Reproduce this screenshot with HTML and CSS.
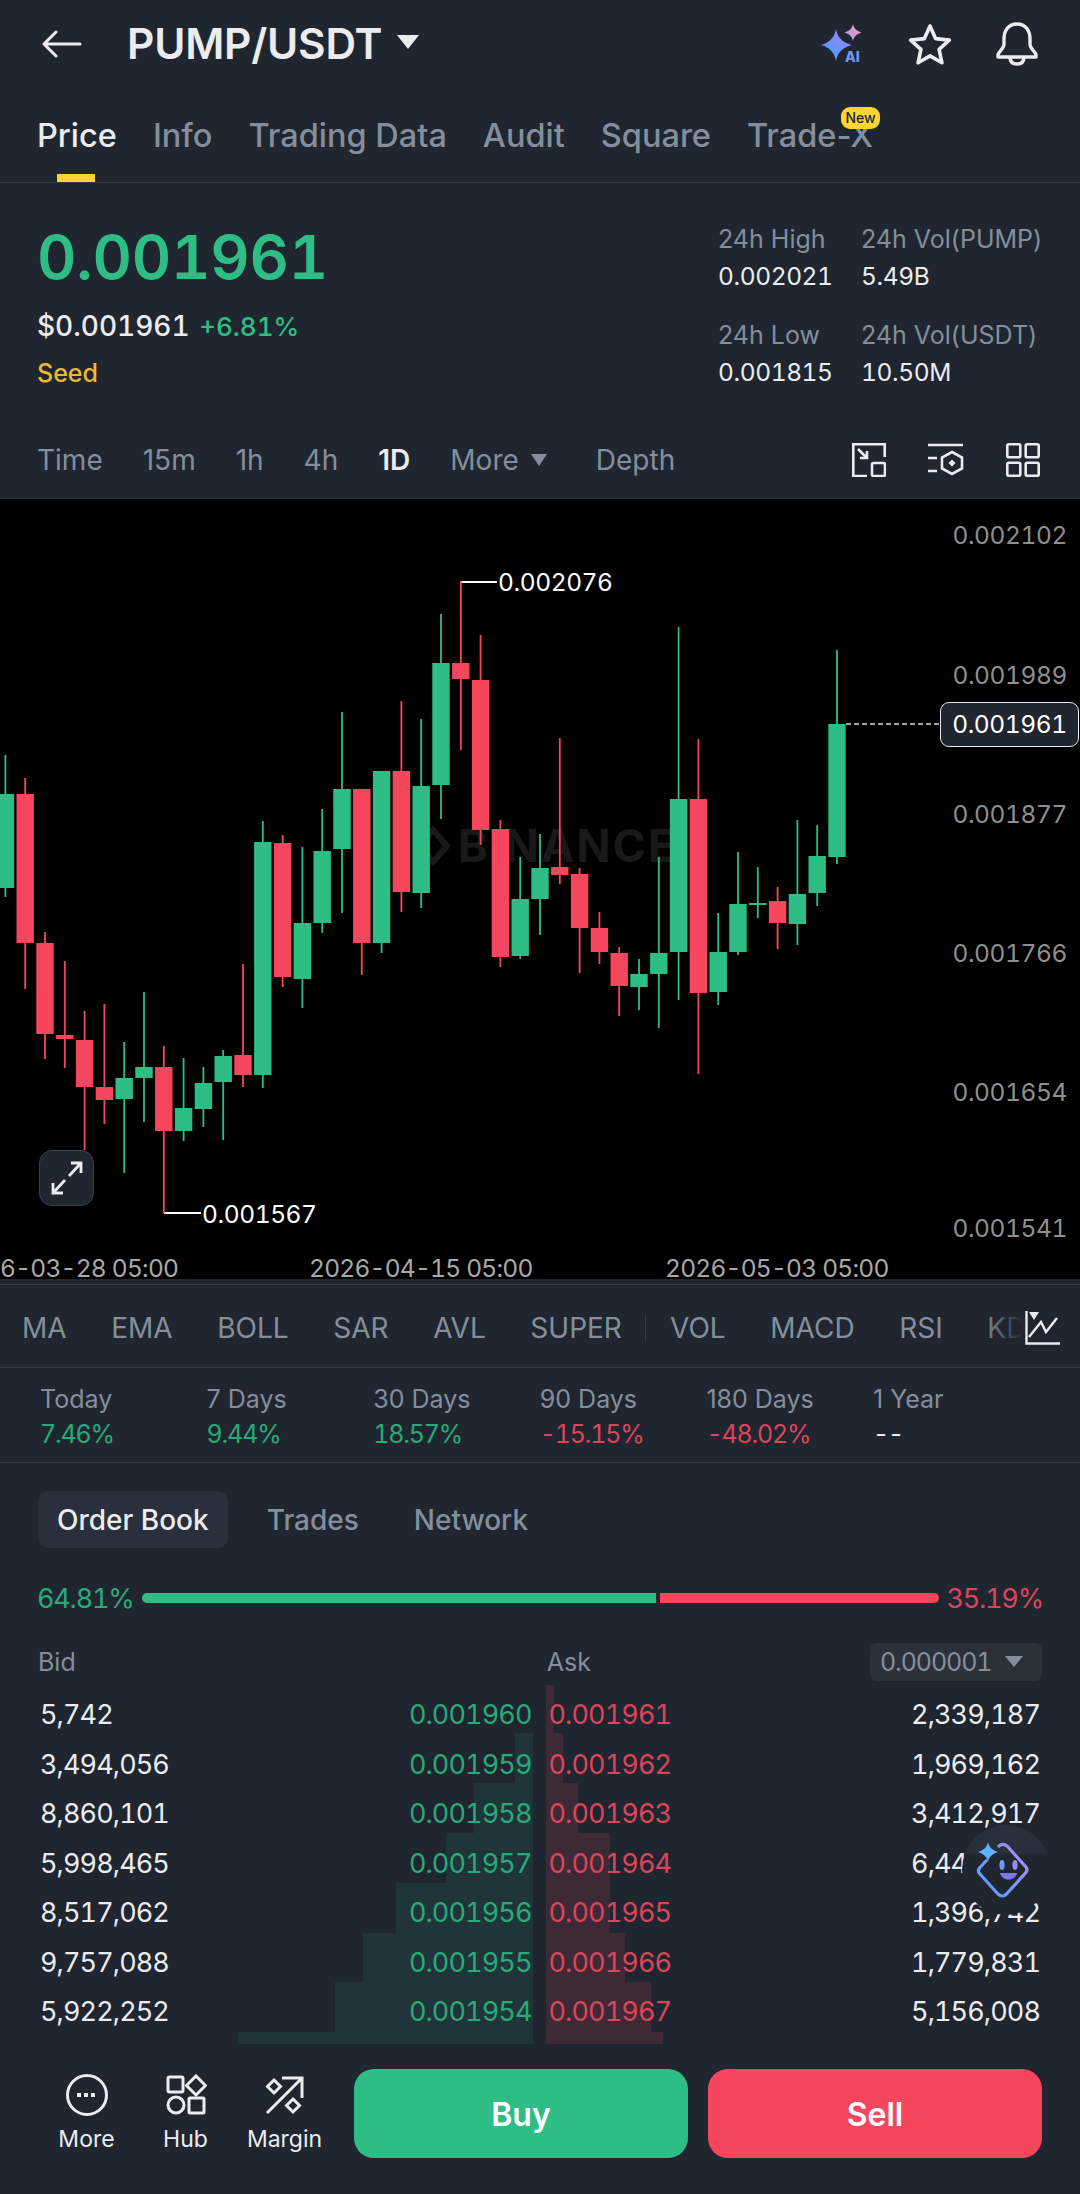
FILE: index.html
```html
<!DOCTYPE html>
<html lang="en">
<head>
    <meta charset="UTF-8">
    <meta name="viewport" content="width=device-width, initial-scale=1.0">
    <title>PUMP/USDT</title>
    <link rel="stylesheet" href="styles.css">
</head>
<body>
<div class="app">

    <header class="topbar">
        <svg class="back" width="40" height="28" viewBox="0 0 40 28" fill="none" stroke="#eaecef" stroke-width="3" stroke-linecap="round" stroke-linejoin="round"><path d="M38 14H2M14 2 2 14l12 12"/></svg>
        <h1 class="pair">PUMP/USDT</h1>
        <span class="caret caret-title"></span>
        <div class="top-icons">
            <svg class="icon-ai" width="46" height="40" viewBox="0 0 46 40">
                <defs>
                    <linearGradient id="aiBig" x1="0" y1="1" x2="1" y2="0"><stop offset="0" stop-color="#3f9bff"/><stop offset="1" stop-color="#a884ff"/></linearGradient>
                    <linearGradient id="aiSmall" x1="0" y1="1" x2="1" y2="0"><stop offset="0" stop-color="#a98cf5"/><stop offset="1" stop-color="#f5a3b8"/></linearGradient>
                </defs>
                <path fill="url(#aiBig)" d="M16 5c1.500 8 6 13.500 16 16-10 2.500-14.500 8-16 16-1.500-8-6-13.500-15-16 9-2.500 13.500-8 15-16z"/>
                <path fill="url(#aiSmall)" d="M33 0c.8 4 3.500 7 8.500 8.500-5 1.500-7.700 4.500-8.500 8.500-.8-4-3.500-7-8.500-8.500 5-1.500 7.700-4.500 8.500-8.500z"/>
                <text class="ai-text" x="25" y="38">AI</text>
            </svg>
            <svg class="icon-star" width="44" height="42" viewBox="0 0 44 42" fill="none" stroke="#eaecef" stroke-width="3.600" stroke-linejoin="round"><path d="M22 3l5.600 12.600 13.700 1.500-10.200 9.200 2.800 13.500-11.900-6.900-11.900 6.900 2.800-13.500L2.700 17.100l13.700-1.500z"/></svg>
            <svg class="icon-bell" width="42" height="44" viewBox="0 0 42 44" fill="none" stroke="#eaecef" stroke-width="3.400" stroke-linejoin="round"><path d="M21 2C12 2 8 9 8 17v5c0 5-6 8-6 11v2h38v-2c0-3-6-6-6-11v-5c0-8-4-15-13-15z"/><path d="M14 35c0 5 3 7 7 7s7-2 7-7"/></svg>
        </div>
    </header>

    <nav class="tabs">
        <a class="tab active">Price</a>
        <a class="tab">Info</a>
        <a class="tab">Trading Data</a>
        <a class="tab">Audit</a>
        <a class="tab">Square</a>
        <a class="tab">Trade-X<span class="badge">New</span></a>
    </nav>

    <section class="summary">
        <div class="price-box">
            <div class="last-price">0.001961</div>
            <div class="sub-price">$0.001961 <span class="up">+6.81%</span></div>
            <div class="seed">Seed</div>
        </div>
        <div class="stats">
            <div class="stat"><span class="stat-label">24h High</span><span class="stat-value">0.002021</span></div>
            <div class="stat"><span class="stat-label">24h Vol(PUMP)</span><span class="stat-value">5.49B</span></div>
            <div class="stat"><span class="stat-label">24h Low</span><span class="stat-value">0.001815</span></div>
            <div class="stat"><span class="stat-label">24h Vol(USDT)</span><span class="stat-value">10.50M</span></div>
        </div>
    </section>

    <div class="intervals">
        <span>Time</span>
        <span>15m</span>
        <span>1h</span>
        <span>4h</span>
        <span class="current">1D</span>
        <span class="more">More<i class="caret caret-more"></i></span>
        <span class="depth">Depth</span>
        <div class="chart-tools">
            <svg width="34" height="34" viewBox="0 0 34 34" fill="none" stroke="#eaecef" stroke-width="2.600"><path d="M15 33H1.300V1.300h31.400V14"/><rect x="20" y="20" width="13" height="13" rx="1.500"/><path d="M6 6l9 9M15 8v7H8"/></svg>
            <svg width="36" height="33" viewBox="0 0 36 33" fill="none" stroke="#eaecef" stroke-width="2.600"><path d="M0 2h35M0 15h9M0 28h9"/><path d="M24 9l10 5.500v11L24 31l-10-5.500v-11z"/><path fill="#eaecef" stroke="none" d="M24 16.500l3.500 3.500-3.500 3.500-3.500-3.500z"/></svg>
            <svg width="34" height="34" viewBox="0 0 34 34" fill="none" stroke="#eaecef" stroke-width="2.600"><rect x="1.300" y="1.300" width="13" height="13" rx="1.500"/><rect x="19.700" y="1.300" width="13" height="13" rx="1.500"/><rect x="1.300" y="19.700" width="13" height="13" rx="1.500"/><rect x="19.700" y="19.700" width="13" height="13" rx="1.500"/></svg>
        </div>
    </div>

    <section class="chart">
        <div class="watermark">
            <svg width="34" height="40" viewBox="0 0 34 40" fill="none" stroke="#191919" stroke-width="6"><path d="M17 4 31 20 17 36 3 20z"/></svg>
            <span>BINANCE</span>
        </div>
        <svg id="candles" class="candles" width="1080" height="780" viewBox="0 499 1080 780">
            <path d="M461 582h36M164 1213h37" stroke="#fff" stroke-width="2" fill="none"/>
            <path d="M846 724h94" stroke="#d5d5d5" stroke-width="1.500" stroke-dasharray="5 3" fill="none"/>
        </svg>
        <span class="axis axis-1">0.002102</span>
        <span class="axis axis-2">0.001989</span>
        <span class="axis axis-3">0.001877</span>
        <span class="axis axis-4">0.001766</span>
        <span class="axis axis-5">0.001654</span>
        <span class="axis axis-6">0.001541</span>
        <span class="now-tag">0.001961</span>
        <span class="mark mark-high">0.002076</span>
        <span class="mark mark-low">0.001567</span>
        <span class="date date-1">6-03-28 05:00</span>
        <span class="date date-2">2026-04-15 05:00</span>
        <span class="date date-3">2026-05-03 05:00</span>
        <button class="expand">
            <svg width="34" height="36" viewBox="0 0 34 36" fill="none" stroke="#eaecef" stroke-width="2.800"><path d="M19 16 31 3M21 3h10v10M15 20 3 33M3 23v10h10"/></svg>
        </button>
    </section>

    <div class="indicators">
        <span>MA</span>
        <span>EMA</span>
        <span>BOLL</span>
        <span>SAR</span>
        <span>AVL</span>
        <span>SUPER</span>
        <i class="sep"></i>
        <span>VOL</span>
        <span>MACD</span>
        <span>RSI</span>
        <span>KDJ</span>
        <div class="indicator-btn">
            <svg width="36" height="35" viewBox="0 0 36 35" fill="none" stroke="#eaecef" stroke-width="2.400"><path d="M1.500 1v32.500H35"/><path d="M4 27 16 12l5 10L32 8"/><path fill="#eaecef" stroke="none" d="M4 2h10L9 10z"/></svg>
        </div>
    </div>

    <div class="periods">
        <div class="period"><span>Today</span><b class="up">7.46%</b></div>
        <div class="period"><span>7 Days</span><b class="up">9.44%</b></div>
        <div class="period"><span>30 Days</span><b class="up">18.57%</b></div>
        <div class="period"><span>90 Days</span><b class="down">-15.15%</b></div>
        <div class="period"><span>180 Days</span><b class="down">-48.02%</b></div>
        <div class="period"><span>1 Year</span><b class="flat">--</b></div>
    </div>

    <div class="book-tabs">
        <a class="book-tab active">Order Book</a>
        <a class="book-tab">Trades</a>
        <a class="book-tab">Network</a>
    </div>

    <div class="ratio">
        <span class="up">64.81%</span>
        <div class="ratio-bar">
            <i class="ratio-buy"></i>
            <i class="ratio-sell"></i>
        </div>
        <span class="down">35.19%</span>
    </div>

    <div class="book-head">
        <span class="head-bid">Bid</span>
        <span class="head-ask">Ask</span>
        <span class="tick">0.000001<i class="caret caret-tick"></i></span>
    </div>

    <section class="book">
        <svg class="depth-bg" width="1080" height="364" viewBox="0 1680 1080 364">
            <path fill="#2ebd85" fill-opacity="0.1" d="M533 1733h-18v50h-41v50h-28v50h-50v50h-33v49h-28v50H238v12h295z"/>
            <path fill="#f6465d" fill-opacity="0.14" d="M546 1685h8v48h9v50h15v50h32v100h15v49h26v50h12v12H546z"/>
        </svg>
        <div class="row"><div class="side"><span>5,742</span><span class="up">0.001960</span></div><div class="side"><span class="down">0.001961</span><span>2,339,187</span></div></div>
        <div class="row"><div class="side"><span>3,494,056</span><span class="up">0.001959</span></div><div class="side"><span class="down">0.001962</span><span>1,969,162</span></div></div>
        <div class="row"><div class="side"><span>8,860,101</span><span class="up">0.001958</span></div><div class="side"><span class="down">0.001963</span><span>3,412,917</span></div></div>
        <div class="row"><div class="side"><span>5,998,465</span><span class="up">0.001957</span></div><div class="side"><span class="down">0.001964</span><span>6,443,208</span></div></div>
        <div class="row"><div class="side"><span>8,517,062</span><span class="up">0.001956</span></div><div class="side"><span class="down">0.001965</span><span>1,396,742</span></div></div>
        <div class="row"><div class="side"><span>9,757,088</span><span class="up">0.001955</span></div><div class="side"><span class="down">0.001966</span><span>1,779,831</span></div></div>
        <div class="row"><div class="side"><span>5,922,252</span><span class="up">0.001954</span></div><div class="side"><span class="down">0.001967</span><span>5,156,008</span></div></div>
        <div class="bot">
            <svg width="88" height="90" viewBox="0 0 88 90" fill="none">
                <defs>
                    <linearGradient id="botLine" x1="0" y1="1" x2="1" y2="0"><stop offset="0" stop-color="#4aa3ff"/><stop offset="1" stop-color="#b08cf5"/></linearGradient>
                </defs>
                <path stroke="url(#botLine)" stroke-width="3.200" stroke-linecap="round" d="M24 36l-6 6.500c-2 2-2 4.500 0 6.500l18 20c2.500 2.500 6 2.500 8.500 0l19-21c1.800-2 1.800-4.500 0-6.500l-18-20c-2.500-2.800-6-2.800-8.500-.5"/>
                <path fill="#5fb0ff" d="M26 17c1 5 4 8 10 10-6 2-9 5-10 10-1-5-4-8-10-10 6-2 9-5 10-10z"/>
                <ellipse cx="40" cy="40" rx="2.600" ry="5" fill="#6f97f5"/>
                <ellipse cx="53" cy="40" rx="2.600" ry="5" fill="#8d8cf5"/>
                <path fill="#7b78f0" d="M38 48h17c-1 4-4 6.500-8.500 6.500S39 52 38 48z"/>
            </svg>
        </div>
    </section>

    <footer class="actions">
        <a class="action">
            <svg width="42" height="42" viewBox="0 0 42 42" fill="none" stroke="#eaecef" stroke-width="3"><circle cx="21" cy="21" r="19.500"/><path stroke-width="4" stroke-dasharray="4 3" d="M11 21h21"/></svg>
            <span>More</span>
        </a>
        <a class="action">
            <svg width="42" height="42" viewBox="0 0 42 42" fill="none" stroke="#eaecef" stroke-width="3"><rect x="3" y="3" width="15" height="15" rx="1.500"/><path d="M31 2l9.500 9.500L31 21l-9.500-9.500z"/><circle cx="11" cy="31" r="8"/><rect x="24" y="24" width="15" height="15" rx="1"/></svg>
            <span>Hub</span>
        </a>
        <a class="action">
            <svg width="42" height="42" viewBox="0 0 42 42" fill="none" stroke="#eaecef" stroke-width="3"><path d="M3 39 38 4M18 4h20v20"/><path d="M10 6l6.500 6.500L10 19l-6.500-6.500z"/><path d="M29 25l6.500 6.500L29 38l-6.500-6.500z"/></svg>
            <span>Margin</span>
        </a>
        <button class="trade buy">Buy</button>
        <button class="trade sell">Sell</button>
    </footer>

</div>
<script src="chart.js"></script>
</body>
</html>
```

FILE: styles.css
```css
* {
    box-sizing: border-box;
}
body {
    margin: 0;
    background-color: #1f2630;
    font-family: Inter, "Liberation Sans", sans-serif;
    color: #eaecef;
}
a {
    display: block;
}
.app {
    width: 1080px;
    height: 2194px;
    overflow: hidden;
    background-color: #1f2630;
}
.up {
    color: #2ebd85;
}
.down {
    color: #f6465d;
}
.caret {
    display: block;
    width: 0;
    height: 0;
    border-style: solid;
    border-color: transparent;
    border-top-color: #eaecef;
}

/* figures use even digit widths, like the app */
.last-price,
.sub-price,
.stat-value,
.axis,
.now-tag,
.mark,
.date,
.period b,
.ratio,
.tick,
.row {
    font-variant-numeric: tabular-nums;
}

/* top bar */
.topbar {
    display: flex;
    align-items: center;
    height: 88px;
    padding-left: 42px;
}
.pair {
    margin: 0 0 0 45px;
    font-size: 42.4px;
    font-weight: 600;
    line-height: 48px;
    letter-spacing: -0.2px;
}
.caret-title {
    margin: 0 0 4px 15px;
    border-width: 14px 11px 0;
}
.top-icons {
    display: flex;
    align-items: center;
    margin-left: auto;
    padding-right: 42px;
}
.icon-ai {
    margin-right: 42px;
}
.icon-star {
    margin-right: 44px;
}
.ai-text {
    font-size: 14px;
    font-weight: 800;
    fill: #6f97f5;
}

/* tabs */
.tabs {
    display: flex;
    gap: 36px;
    height: 95px;
    padding: 30px 0 0 37px;
    border-bottom: 1px solid #343b46;
}
.tab {
    position: relative;
    height: 36px;
    font-size: 32.5px;
    font-weight: 500;
    line-height: 36px;
    color: #848e9c;
    white-space: nowrap;
}
.tab.active {
    color: #eaecef;
}
.tab.active::after {
    content: "";
    position: absolute;
    left: 20px;
    top: 56px;
    width: 38px;
    height: 8px;
    background-color: #fcd535;
}
.badge {
    position: absolute;
    right: -7px;
    top: -11px;
    width: 39px;
    height: 22px;
    border-radius: 9px;
    background-color: #fcd535;
    color: #202630;
    font-size: 14px;
    font-weight: 500;
    line-height: 22px;
    text-align: center;
}

/* price summary */
.summary {
    display: flex;
    justify-content: space-between;
    height: 238px;
    padding: 0 38px 0 37px;
}
.price-box {
    padding-top: 37px;
}
.last-price {
    font-size: 61px;
    font-weight: 600;
    line-height: 74px;
    letter-spacing: -0.2px;
    color: #2ebd85;
}
.sub-price {
    margin-top: 14px;
    font-size: 28px;
    font-weight: 500;
    line-height: 36px;
}
.sub-price .up {
    font-size: 26px;
    margin-left: 2px;
}
.seed {
    margin-top: 12px;
    font-size: 25px;
    font-weight: 500;
    line-height: 32px;
    color: #ecb92f;
}
.stats {
    display: grid;
    grid-template-columns: 143px 181px;
    align-content: start;
    row-gap: 27px;
    padding-top: 40px;
}
.stat-label,
.stat-value {
    display: block;
    font-size: 25px;
    line-height: 32px;
    white-space: nowrap;
}
.stat-label {
    color: #848e9c;
}
.stat-value {
    margin-top: 5px;
    font-size: 24.5px;
    letter-spacing: -0.4px;
}

/* intervals */
.intervals {
    display: flex;
    align-items: center;
    gap: 40px;
    height: 77px;
    padding: 0 40px 0 37px;
    font-size: 28px;
    color: #848e9c;
}
.intervals .current {
    color: #eaecef;
    font-weight: 600;
}
.more {
    display: flex;
    align-items: center;
}
.caret-more {
    margin-left: 12px;
    border-width: 12px 8px 0;
    border-top-color: #848e9c;
}
.depth {
    margin-left: 9px;
}
.chart-tools {
    display: flex;
    align-items: center;
    gap: 42px;
    margin-left: auto;
}

/* chart */
.chart {
    position: relative;
    height: 781px;
    margin-bottom: 5px;
    border-top: 1px solid #2b3139;
    background-color: #000;
}
.candles {
    position: absolute;
    left: 0;
    top: 0;
}
.watermark {
    position: absolute;
    left: 416px;
    top: 325px;
    display: flex;
    align-items: center;
    gap: 8px;
    font-size: 45px;
    font-weight: 700;
    line-height: 44px;
    letter-spacing: 2px;
    color: #191919;
}
.axis,
.now-tag,
.mark,
.date {
    position: absolute;
    font-size: 24.5px;
    line-height: 30px;
    letter-spacing: -0.4px;
    white-space: nowrap;
}
.axis {
    right: 13px;
    color: #8f8f8f;
}
.axis-1 { top: 21px; }
.axis-2 { top: 161px; }
.axis-3 { top: 300px; }
.axis-4 { top: 439px; }
.axis-5 { top: 578px; }
.axis-6 { top: 714px; }
.now-tag {
    left: 940px;
    top: 203px;
    width: 139px;
    height: 45px;
    border: 1.5px solid #e6e6e6;
    border-radius: 9px;
    background-color: #1f2630;
    color: #fff;
    line-height: 42px;
    text-align: center;
}
.mark {
    color: #fff;
}
.mark-high {
    left: 498px;
    top: 68px;
}
.mark-low {
    left: 202px;
    top: 700px;
}
.date {
    top: 759px;
    line-height: 20px;
    letter-spacing: -0.75px;
    color: #a8a8a8;
}
.date-1 { left: 0; }
.date-2 { left: 309px; }
.date-3 { left: 665px; }
.expand {
    position: absolute;
    left: 39px;
    top: 651px;
    display: flex;
    align-items: center;
    justify-content: center;
    width: 55px;
    height: 56px;
    padding: 0;
    border: 1.5px solid #3a414c;
    border-radius: 13px;
    background-color: #1f2630;
}

/* indicators */
.indicators {
    position: relative;
    display: flex;
    align-items: center;
    gap: 44.6px;
    height: 84px;
    padding: 3px 0 0 22px;
    border-top: 1px solid #343b46;
    border-bottom: 1px solid #343b46;
    font-size: 28px;
    color: #848e9c;
    white-space: nowrap;
    overflow: hidden;
}
.sep {
    display: block;
    flex: none;
    width: 1px;
    height: 28px;
    margin: 0 -21px;
    background-color: #343b46;
}
.indicator-btn {
    position: absolute;
    right: 0;
    top: 0;
    display: flex;
    align-items: center;
    justify-content: flex-end;
    width: 97px;
    height: 100%;
    padding: 3px 19px 0 0;
    background: linear-gradient(to right, rgba(31, 38, 48, 0), #1f2630 42%);
}

/* period changes */
.periods {
    display: grid;
    grid-template-columns: repeat(6, 166.6px);
    height: 95px;
    padding: 16px 0 0 40px;
    border-bottom: 1px solid #343b46;
    font-size: 25px;
    line-height: 30px;
}
.period span,
.period b {
    display: block;
    font-weight: 400;
}
.period span {
    color: #848e9c;
}
.period b {
    margin-top: 5px;
    letter-spacing: -1.2px;
}
.period .up,
.ratio .up,
.row .up {
    color: #2aa97a;
}
.period .down,
.ratio .down,
.row .down {
    color: #dd4459;
}

/* order book */
.book-tabs {
    display: flex;
    gap: 17px;
    margin: 28px 0 0 38px;
}
.book-tab {
    height: 57px;
    padding: 1px 19px 0;
    border-radius: 10px;
    font-size: 28px;
    font-weight: 500;
    line-height: 57px;
    color: #848e9c;
}
.book-tab.active {
    background-color: #29303b;
    color: #eaecef;
    margin-right: 3px;
}
.ratio {
    display: flex;
    align-items: center;
    height: 36px;
    margin-top: 32px;
    padding: 0 37px;
    font-size: 27px;
    letter-spacing: -1.2px;
}
.ratio span {
    flex: 1;
}
.ratio span.down {
    text-align: right;
}
.ratio-bar {
    display: flex;
    flex: none;
    gap: 4px;
    height: 10px;
}
.ratio-buy,
.ratio-sell {
    display: block;
    height: 10px;
}
.ratio-buy {
    width: 514px;
    border-radius: 5px 0 0 5px;
    background-color: #2ebd85;
}
.ratio-sell {
    width: 279px;
    border-radius: 0 5px 5px 0;
    background-color: #f6465d;
}
.book-head {
    display: flex;
    align-items: center;
    height: 38px;
    margin-top: 26px;
    padding: 1px 38px 0;
    font-size: 25px;
    color: #848e9c;
}
.head-ask {
    margin-left: 471px;
}
.tick {
    display: flex;
    align-items: center;
    width: 172px;
    height: 38px;
    margin-left: auto;
    padding-left: 10px;
    border-radius: 6px;
    background-color: #2b3139;
    letter-spacing: -1.1px;
}
.caret-tick {
    margin-left: 14px;
    border-width: 11px 9px 0;
    border-top-color: #848e9c;
}
.book {
    position: relative;
    height: 364px;
    padding: 10px 40px 0;
    font-size: 27px;
    letter-spacing: -0.9px;
}
.depth-bg {
    position: absolute;
    left: 0;
    top: 0;
}
.row {
    position: relative;
    display: flex;
    gap: 17px;
    height: 49.5px;
    line-height: 49.5px;
}
.side {
    display: flex;
    justify-content: space-between;
    width: 491.5px;
}
.bot {
    position: absolute;
    left: 962px;
    top: 145px;
    width: 88px;
    height: 90px;
    border-radius: 50%;
    background: linear-gradient(#2a303b 0, #2a303b 30%, #1f2630 34%);
}

/* bottom actions */
.actions {
    display: flex;
    gap: 20px;
    margin-top: 25px;
    padding-left: 37px;
}
.action {
    display: flex;
    flex-direction: column;
    align-items: center;
    width: 99px;
    margin-right: -20px;
    padding-top: 5px;
    font-size: 23px;
    line-height: 30px;
    white-space: nowrap;
}
.action span {
    margin-top: 8px;
}
.action:nth-child(3) {
    margin-right: 0;
}
.trade {
    width: 334px;
    height: 89px;
    padding-top: 2px;
    border: none;
    border-radius: 20px;
    color: #fff;
    font-family: inherit;
    font-size: 32px;
    font-weight: 600;
}
.buy {
    background-color: #2ebd85;
}
.sell {
    background-color: #f6465d;
}
```

FILE: chart.js
```js
// wick top, body top, body bottom, wick bottom, 1 = up candle (screen y, page pixels)
const candles = [
    [755, 794, 888, 897, 1], [778, 794, 943, 989, 0], [932, 943, 1034, 1059, 0], [961, 1035, 1039, 1068, 0],
    [1011, 1040, 1087, 1150, 0], [1004, 1087, 1100, 1124, 0], [1042, 1078, 1099, 1173, 1], [992, 1067, 1078, 1122, 1],
    [1046, 1067, 1131, 1213, 0], [1058, 1108, 1131, 1141, 1], [1067, 1083, 1109, 1127, 1], [1050, 1056, 1082, 1140, 1],
    [964, 1055, 1075, 1087, 0], [821, 842, 1075, 1088, 1], [835, 843, 977, 987, 0], [847, 923, 979, 1008, 1],
    [809, 851, 923, 933, 1], [712, 789, 849, 913, 1], [789, 789, 943, 975, 0], [771, 771, 943, 953, 1],
    [701, 771, 892, 912, 0], [719, 786, 893, 908, 1], [614, 663, 785, 819, 1], [581, 663, 679, 750, 0],
    [635, 680, 830, 845, 0], [820, 829, 957, 967, 0], [857, 899, 956, 959, 1], [834, 868, 899, 935, 1],
    [738, 867, 875, 884, 0], [868, 874, 928, 973, 0], [912, 928, 952, 964, 0], [947, 953, 986, 1016, 0],
    [959, 974, 987, 1010, 1], [857, 953, 974, 1028, 1], [627, 799, 952, 1000, 1], [739, 799, 993, 1074, 0],
    [913, 952, 992, 1005, 1], [852, 904, 952, 955, 1], [867, 903, 905, 918, 1], [887, 901, 923, 949, 0],
    [820, 894, 924, 945, 1], [825, 856, 893, 906, 1], [650, 724, 857, 864, 1]
];

const svg = document.getElementById('candles');
const last = candles.length - 1;

function addRect(x, y, w, h, color) {
    const r = document.createElementNS('http://www.w3.org/2000/svg', 'rect');
    r.setAttribute('x', x);
    r.setAttribute('y', y);
    r.setAttribute('width', w);
    r.setAttribute('height', h);
    r.setAttribute('fill', color);
    svg.appendChild(r);
}

candles.forEach((c, i) => {
    const x = 837 - (last - i) * 19.8;
    const color = c[4] ? '#2ebd85' : '#f6465d';
    addRect(x - 0.9, c[0], 1.8, c[3] - c[0], color);
    addRect(x - 8.7, c[1], 17.4, c[2] - c[1], color);
});
```
